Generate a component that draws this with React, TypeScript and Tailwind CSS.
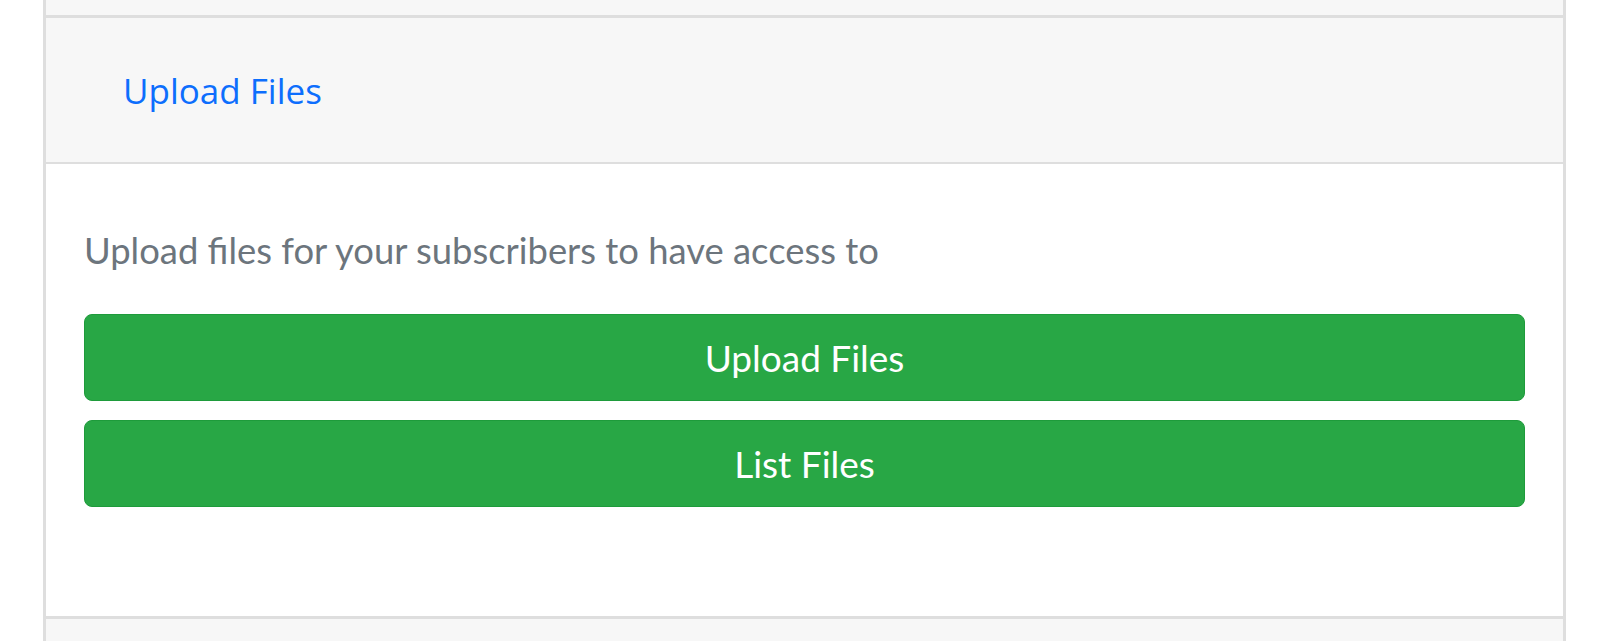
import React from 'react';

const App: React.FC = () => {
  return (
    <div className="min-h-screen bg-white">
      <div className="ml-[43px] mr-[34px] flex h-[641px] flex-col border-x-[3px] border-[#dedede]">
        {/* Previous card footer */}
        <div className="h-[18px] shrink-0 border-b-[3px] border-[#dedede] bg-[#f7f7f7]" />

        {/* Header */}
        <div className="flex h-[146px] shrink-0 items-center border-b-2 border-[#dedede] bg-[#f7f7f7] pl-[77px]">
          <a
            href="#"
            className="text-[35px] leading-none text-[#0d6efd]"
            style={{ fontFamily: '"Open Sans", sans-serif' }}
          >
            Upload Files
          </a>
        </div>

        {/* Body */}
        <div
          className="flex h-[452px] shrink-0 flex-col px-[38px] pt-[66px]"
          style={{ fontFamily: 'Lato, sans-serif' }}
        >
          <p className="text-[36.4px] leading-[40px] text-[#6c757d]">
            Upload files for your subscribers to have access to
          </p>
          <div className="mt-[44px] flex flex-col gap-[19px]">
            <button className="h-[87px] w-full rounded-[8px] border border-[#1e9b3b] bg-[#28a745] text-[37px] text-white">
              Upload Files
            </button>
            <button className="h-[87px] w-full rounded-[8px] border border-[#1e9b3b] bg-[#28a745] text-[37px] text-white">
              List Files
            </button>
          </div>
        </div>

        {/* Next card */}
        <div className="flex-1 border-t-[3px] border-[#dedede] bg-[#f7f7f7]" />
      </div>
    </div>
  );
};

export default App;
